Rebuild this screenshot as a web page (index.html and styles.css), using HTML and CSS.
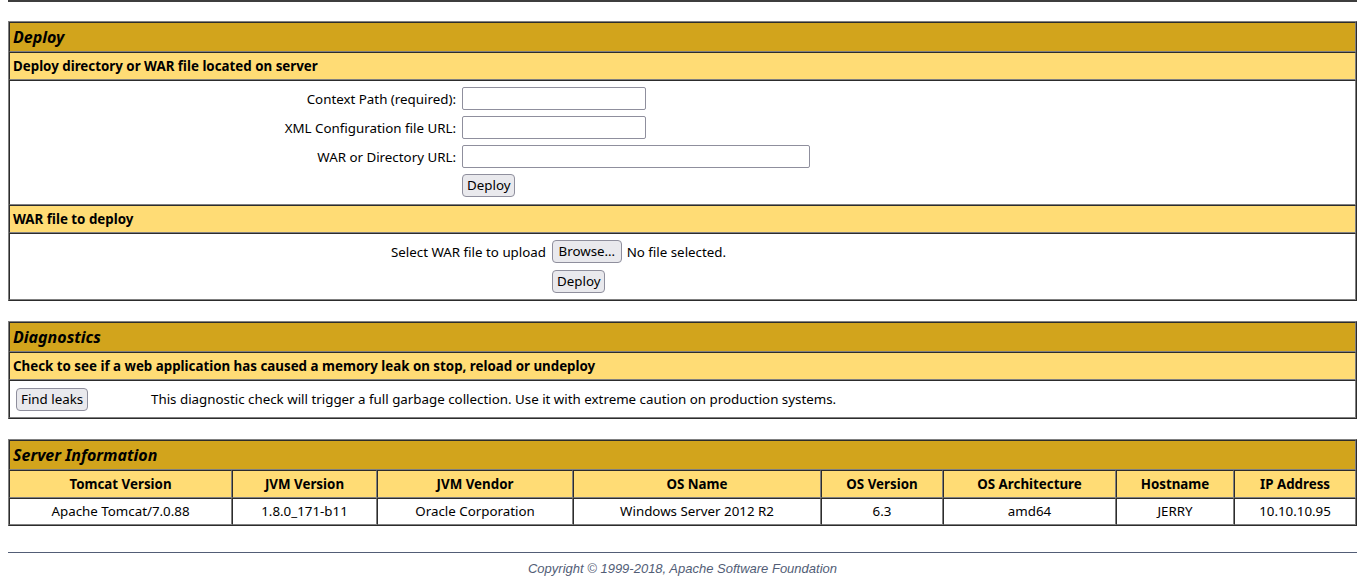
FILE: index.html
```html
<!DOCTYPE html>
<html>
<head>
<meta charset="utf-8">
<title>Tomcat Web Application Manager</title>
<link rel="stylesheet" href="styles.css">
</head>
<body>
<div class="prev-edge"></div>

<table class="panel">
  <tr><td class="title">Deploy</td></tr>
  <tr><td class="header-left">Deploy directory or WAR file located on server</td></tr>
  <tr>
    <td class="body-cell">
      <form class="form-grid deploy-grid">
        <div class="row-right">Context Path (required):</div>
        <div class="row-left"><input type="text" class="txt txt-20"></div>
        <div class="row-right">XML Configuration file URL:</div>
        <div class="row-left"><input type="text" class="txt txt-20"></div>
        <div class="row-right">WAR or Directory URL:</div>
        <div class="row-left"><input type="text" class="txt txt-40"></div>
        <div class="row-right"></div>
        <div class="row-left"><button type="button" class="btn">Deploy</button></div>
      </form>
    </td>
  </tr>
  <tr><td class="header-left">WAR file to deploy</td></tr>
  <tr>
    <td class="body-cell">
      <form class="form-grid upload-grid">
        <div class="row-right">Select WAR file to upload</div>
        <div class="row-left file-line"><button type="button" class="btn btn-browse">Browse…</button><span class="file-status">No file selected.</span></div>
        <div class="row-right"></div>
        <div class="row-left"><button type="button" class="btn">Deploy</button></div>
      </form>
    </td>
  </tr>
</table>

<table class="panel spaced">
  <tr><td class="title">Diagnostics</td></tr>
  <tr><td class="header-left">Check to see if a web application has caused a memory leak on stop, reload or undeploy</td></tr>
  <tr>
    <td class="body-cell">
      <form class="form-grid diag-grid">
        <div class="row-left"><button type="button" class="btn">Find leaks</button></div>
        <div class="row-left">This diagnostic check will trigger a full garbage collection. Use it with extreme caution on production systems.</div>
      </form>
    </td>
  </tr>
</table>

<table class="panel spaced info">
  <colgroup>
    <col class="c1"><col class="c2"><col class="c3"><col class="c4"><col class="c5"><col class="c6"><col class="c7"><col class="c8">
  </colgroup>
  <tr><td class="title" colspan="8">Server Information</td></tr>
  <tr>
    <td class="header-center">Tomcat Version</td>
    <td class="header-center">JVM Version</td>
    <td class="header-center">JVM Vendor</td>
    <td class="header-center">OS Name</td>
    <td class="header-center">OS Version</td>
    <td class="header-center">OS Architecture</td>
    <td class="header-center">Hostname</td>
    <td class="header-center">IP Address</td>
  </tr>
  <tr>
    <td class="row-center">Apache Tomcat/7.0.88</td>
    <td class="row-center">1.8.0_171-b11</td>
    <td class="row-center">Oracle Corporation</td>
    <td class="row-center">Windows Server 2012 R2</td>
    <td class="row-center">6.3</td>
    <td class="row-center">amd64</td>
    <td class="row-center">JERRY</td>
    <td class="row-center">10.10.10.95</td>
  </tr>
</table>

<hr class="footer-rule">
<div class="footer">Copyright © 1999-2018, Apache Software Foundation</div>
</body>
</html>
```

FILE: styles.css
```css
html, body {
  background: #ffffff;
}
body {
  margin: 0 8px 8px;
  font-family: "Liberation Sans", Arial, sans-serif;
  color: #000;
}
.prev-edge {
  height: 2px;
  margin: 0 -8px 19px;
  background: #3d3d3d;
}
.panel {
  width: 100%;
  border-collapse: separate;
  border-spacing: 0;
  border: 1px outset #808080;
  font-family: "Noto Sans", sans-serif;
}
.panel.spaced {
  margin-top: 20px;
}
.panel td {
  border: 1px inset #808080;
  padding: 3px;
}
.title {
  text-align: left;
  font-style: italic;
  font-weight: bold;
  font-size: 16px;
  line-height: 22px;
  background: #D2A41C;
}
.header-left {
  text-align: left;
  font-weight: bold;
  font-size: 13.333px;
  line-height: 20px;
  background: #FFDC75;
}
.header-center {
  text-align: center;
  font-weight: bold;
  font-size: 13.333px;
  line-height: 20px;
  background: #FFDC75;
}
.row-center {
  text-align: center;
  font-size: 13.333px;
  line-height: 19px;
}
.body-cell {
  font-size: 13.333px;
  line-height: 18px;
}
.form-grid {
  display: grid;
  margin: 0;
  padding-bottom: 1px;
  align-items: center;
  grid-auto-rows: 29px;
}
.deploy-grid {
  grid-template-columns: 446px 1fr;
}
.upload-grid {
  grid-template-columns: 536px 1fr;
  grid-template-rows: 29px 30px;
  padding-bottom: 0;
}
.diag-grid {
  grid-template-columns: 135px 1fr;
  grid-auto-rows: 30px;
  padding-bottom: 0;
}
.row-right {
  text-align: right;
  padding: 0 3px;
}
.row-left {
  text-align: left;
  padding: 0 3px;
}
.file-line {
  display: flex;
  align-items: center;
}
.file-status {
  margin-left: 5px;
}
.txt {
  box-sizing: border-box;
  display: block;
  height: 23px;
  margin: 0;
  padding: 0 4px;
  border: 1px solid #8f8f9d;
  border-radius: 2px;
  background: #fff;
  font: 13.333px "Noto Sans", sans-serif;
}
.txt-20 {
  width: 184px;
}
.txt-40 {
  width: 348px;
}
.btn {
  box-sizing: border-box;
  display: block;
  height: 23px;
  margin: 0;
  padding: 0 4px;
  border: 1px solid #8f8f9d;
  border-radius: 4px;
  background: #e9e9ed;
  color: #000;
  font: 13.333px/19px "Noto Sans", sans-serif;
}
.btn-browse {
  padding: 0 5.5px;
}
.info {
  table-layout: fixed;
}
.c1 { width: 223px; }
.c2 { width: 145px; }
.c3 { width: 196px; }
.c4 { width: 248px; }
.c5 { width: 122px; }
.c6 { width: 173px; }
.c7 { width: 118px; }
.c8 { width: 122px; }
.footer-rule {
  margin: 26px 0 8px;
  height: 0;
  border: 0;
  border-top: 1px solid #525D76;
}
.footer {
  text-align: center;
  font-size: 13px;
  line-height: 15px;
  font-style: italic;
  color: #525D76;
}
```
